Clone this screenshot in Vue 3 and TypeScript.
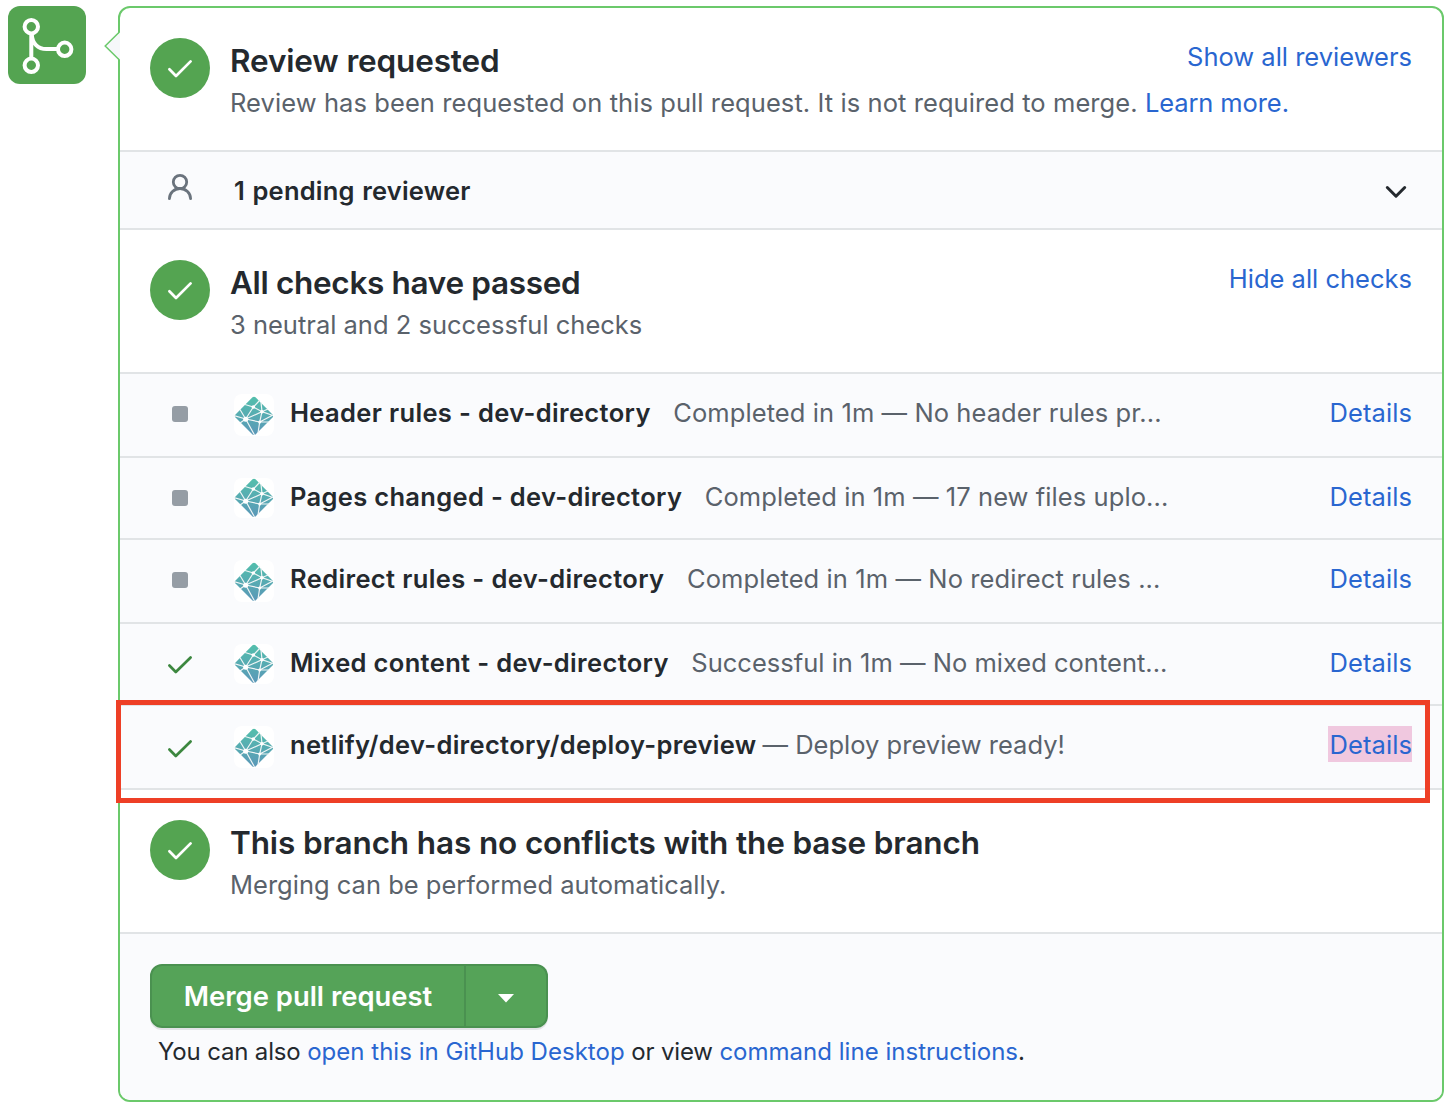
<script setup lang="ts">
interface Check {
  name: string
  meta: string
  status: 'neutral' | 'success'
  nameSpacing: number
  metaSpacing: number
  gap: number
  tall: boolean
  marked?: boolean
}

const checks: Check[] = [
  { name: 'Header rules - dev-directory', meta: 'Completed in 1m — No header rules pr...', status: 'neutral', nameSpacing: 0.35, metaSpacing: 0.085, gap: 22.5, tall: true },
  { name: 'Pages changed - dev-directory', meta: 'Completed in 1m — 17 new files uplo...', status: 'neutral', nameSpacing: 0.32, metaSpacing: 0.08, gap: 22.5, tall: false },
  { name: 'Redirect rules - dev-directory', meta: 'Completed in 1m — No redirect rules ...', status: 'neutral', nameSpacing: 0.37, metaSpacing: 0.1, gap: 22.5, tall: true },
  { name: 'Mixed content - dev-directory', meta: 'Successful in 1m — No mixed content...', status: 'success', nameSpacing: 0.34, metaSpacing: 0.01, gap: 22.5, tall: false },
  { name: 'netlify/dev-directory/deploy-preview', meta: '— Deploy preview ready!', status: 'success', nameSpacing: 0.32, metaSpacing: 0.01, gap: 6, tall: true, marked: true },
]
</script>

<template>
  <div class="page">
    <div class="tile">
      <svg width="78" height="78" viewBox="8 6 78 78" fill="none" stroke="#fff" stroke-width="4">
        <circle cx="31.3" cy="26.7" r="6.7" />
        <circle cx="31.3" cy="65.3" r="6.7" />
        <circle cx="64.7" cy="49.3" r="6.7" />
        <path d="M31.3 34V58M31.8 34C32 43.5 38 49 46.5 49H57.5" />
      </svg>
    </div>

    <main class="box">
      <svg class="arrow" width="17" height="32" viewBox="0 0 17 32">
        <path d="M16 2L1.2 16L16 30" fill="#f6f8fa" />
        <path d="M15.4 2L1.2 16L15.4 30" fill="none" stroke="#6bc96b" stroke-width="1.5" />
      </svg>

      <section class="summary">
        <span class="circle"><svg width="60" height="60" viewBox="0 0 60 60"><path d="M19.4 31.3L26 38L40.6 23.4" /></svg></span>
        <div class="info">
          <h3 class="t-review">Review requested</h3>
          <p><span class="d-review">Review has been requested on this pull request. It is not required to merge.</span> <a class="d-learn">Learn more.</a></p>
        </div>
        <a class="toggle">Show all reviewers</a>
      </section>

      <section class="pending">
        <svg class="person" width="28" height="30" viewBox="0 0 28 30" fill="none" stroke="#6a737d" stroke-width="2.8" stroke-linecap="round">
          <circle cx="14" cy="10" r="6.7" />
          <path d="M3.4 26.7a10.6 10.2 0 0 1 21.2 0" />
        </svg>
        <span class="pending-text">1 pending reviewer</span>
        <svg class="chevron" width="24" height="16" viewBox="0 0 24 16" fill="none" stroke="#24292e" stroke-width="3" stroke-linecap="round" stroke-linejoin="round">
          <path d="M3.3 3.5L12 12.2L20.7 3.5" />
        </svg>
      </section>

      <section class="summary">
        <span class="circle"><svg width="60" height="60" viewBox="0 0 60 60"><path d="M19.4 31.3L26 38L40.6 23.4" /></svg></span>
        <div class="info">
          <h3 class="t-checks">All checks have passed</h3>
          <p>3 neutral and 2 successful checks</p>
        </div>
        <a class="toggle">Hide all checks</a>
      </section>

      <div v-for="c in checks" :key="c.name" class="check" :class="{ tall: c.tall, current: c.marked }">
        <span class="status">
          <i v-if="c.status === 'neutral'" class="neutral"></i>
          <svg v-else width="28" height="22" viewBox="0 0 28 22" fill="none" stroke="#3c873f" stroke-width="2.7" stroke-linecap="round" stroke-linejoin="round">
            <path d="M3.4 12.5L9.8 19L24.6 4.5" />
          </svg>
        </span>
        <span class="avatar">
          <svg width="40" height="40" viewBox="0 0 40 40">
            <defs>
              <linearGradient id="teal" x1="0" y1="0" x2="0" y2="1">
                <stop offset="0" stop-color="#53bfac" />
                <stop offset="1" stop-color="#5b97b8" />
              </linearGradient>
            </defs>
            <path d="M18.5 1.3Q20 0 21.5 1.3L38.5 18.6Q39.7 20 38.5 21.4L21.5 38.4Q20 39.7 18.5 38.4L1.5 21.4Q.3 20 1.5 18.6Z" fill="url(#teal)" />
            <g stroke="#f0f5f5" stroke-width="1.2" fill="none">
              <path d="M11.7 23L19.3 11L26 4M11.7 23L28 15.7L39 19.5M11.7 23L25.7 26L35 26M11.7 23L20.5 39M11.7 23L0 19.6M11.7 23L6 13.5M11.7 23L6 27M11 8.5L19.3 11L28 15.7L34 13M28 15.7L27 6M28 15.7L25.7 26L24 37M25.7 26L39 19" />
            </g>
            <circle cx="11.7" cy="23.3" r="2.5" fill="#fff" />
            <circle cx="19.3" cy="11" r="1.8" fill="#fff" />
            <circle cx="28" cy="15.7" r="1.8" fill="#fff" />
            <circle cx="25.7" cy="26" r="1.5" fill="#fff" />
          </svg>
        </span>
        <strong :style="{ letterSpacing: c.nameSpacing + 'px' }">{{ c.name }}</strong>
        <span class="meta" :style="{ letterSpacing: c.metaSpacing + 'px', marginLeft: c.gap + 'px' }">{{ c.meta }}</span>
        <a class="details" :class="{ marked: c.marked }">Details</a>
      </div>

      <section class="summary last">
        <span class="circle"><svg width="60" height="60" viewBox="0 0 60 60"><path d="M19.4 31.3L26 38L40.6 23.4" /></svg></span>
        <div class="info">
          <h3 class="t-branch">This branch has no conflicts with the base branch</h3>
          <p>Merging can be performed automatically.</p>
        </div>
      </section>

      <section class="footer">
        <div class="group">
          <button class="merge">Merge pull request</button>
          <button class="more" aria-label="Select merge method">
            <svg width="16" height="9" viewBox="0 0 16 9"><path d="M0 0H16L8 8.5Z" fill="#fff" /></svg>
          </button>
        </div>
        <p class="hint">You can also <a>open this in GitHub Desktop</a> or view <a>command line instructions</a>.</p>
      </section>

      <div class="highlight"></div>
    </main>
  </div>
</template>

<style>
body {
  background: #fff;
}
</style>

<style scoped>
.page {
  display: flex;
  align-items: flex-start;
  box-sizing: border-box;
  width: 1446px;
  height: 1116px;
  padding: 6px 2px 0 8px;
  font-family: Inter, "Liberation Sans", sans-serif;
  font-size: 25.5px;
  line-height: 36px;
  color: #24292e;
  white-space: nowrap;
}
.tile {
  flex: none;
  width: 78px;
  height: 78px;
  margin-right: 32px;
  border-radius: 12px;
  background: #54a451;
}
svg { display: block; }
.box {
  position: relative;
  box-sizing: border-box;
  width: 1326px;
  height: 1096px;
  border: 2px solid #6bc96b;
  border-radius: 12px;
}
.arrow {
  position: absolute;
  left: -16px;
  top: 22px;
}
a { color: #2966d0; }
h3, p { margin: 0; }
h3 {
  font-size: 31.5px;
  font-weight: 600;
  line-height: 40px;
}
.t-review { letter-spacing: -0.15px; }
.t-checks { letter-spacing: -0.32px; }
.t-branch { letter-spacing: -0.13px; }
.d-review { letter-spacing: 0.08px; }
.d-learn { letter-spacing: -0.1px; }
.summary {
  display: flex;
  align-items: flex-start;
  box-sizing: border-box;
  height: 144px;
  padding: 30px 30px 0;
  border-bottom: 2px solid #e1e4e6;
}
.circle {
  flex: none;
  width: 60px;
  height: 60px;
  border-radius: 50%;
  background: #54a451;
}
.circle path {
  fill: none;
  stroke: #fff;
  stroke-width: 2.7;
  stroke-linecap: round;
  stroke-linejoin: round;
}
.info {
  flex: 1;
  min-width: 0;
  margin: 3px 0 0 20px;
}
.info p {
  margin-top: 4px;
  color: #5a626b;
}
.toggle {
  flex: none;
  margin-top: 1px;
}
.pending {
  display: flex;
  align-items: center;
  box-sizing: border-box;
  height: 78px;
  padding: 2px 34px 0 46px;
  background: #fafbfd;
  border-bottom: 2px solid #e1e4e6;
}
.person { margin-top: -8px; }
.chevron { margin-top: 1px; }
.pending-text {
  flex: 1;
  margin-left: 40px;
  font-weight: 600;
  letter-spacing: 0.22px;
  word-spacing: 0.8px;
}
.check {
  display: flex;
  align-items: flex-start;
  box-sizing: border-box;
  height: 82px;
  padding: 20px 30px 0 44px;
  background: #fafbfd;
  border-bottom: 2px solid #e1e4e6;
}
.check.tall { height: 84px; }
.status {
  display: flex;
  align-items: center;
  justify-content: center;
  width: 32px;
  height: 40px;
}
.current .status { height: 44px; }
.neutral {
  width: 16px;
  height: 16px;
  border-radius: 3px;
  background: #959da5;
}
.avatar {
  display: flex;
  align-items: flex-end;
  width: 40px;
  height: 40px;
  margin: 0 16px 0 38px;
  border-radius: 8px;
  background: #fff;
}
.tall .avatar { height: 42px; }
strong {
  margin-top: 1px;
  font-weight: 600;
}
.meta {
  margin-top: 1px;
  color: #5a626b;
}
.details {
  margin-left: auto;
  padding: 1px 0 0 1px;
  line-height: 35px;
  letter-spacing: 0.1px;
}
.marked {
  background: #f0c8df;
}
.footer {
  box-sizing: border-box;
  height: 166px;
  padding: 30px 30px 0;
  border-radius: 0 0 10px 10px;
  background: #fafbfd;
}
.group {
  display: flex;
  width: 398px;
  height: 64px;
  border-radius: 12px;
  box-shadow: 0 2px 0 rgba(27, 31, 35, 0.1);
}
button {
  box-sizing: border-box;
  padding: 0;
  border: 2px solid #4a9150;
  background: #55a358;
  color: #fff;
  font: 600 27.4px/36px Inter, sans-serif;
}
.merge {
  width: 316px;
  border-radius: 12px 0 0 12px;
}
.more {
  display: flex;
  align-items: center;
  justify-content: center;
  width: 82px;
  padding-top: 4px;
  border-left: 0;
  border-radius: 0 12px 12px 0;
}
.hint {
  margin: 6px 0 0 8px;
  font-size: 24px;
  letter-spacing: -0.16px;
}
.hint a { letter-spacing: 0.02px; }
.highlight {
  position: absolute;
  left: -4px;
  top: 692px;
  box-sizing: border-box;
  width: 1314px;
  height: 103px;
  border: 5px solid #ee3f26;
}
</style>
